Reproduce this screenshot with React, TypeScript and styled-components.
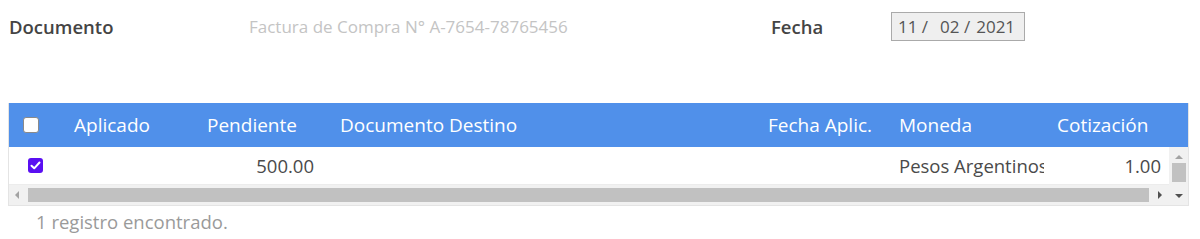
import React from "react";
import styled, { createGlobalStyle } from "styled-components";

const Global = createGlobalStyle`
  html, body { margin: 0; padding: 0; background: #fff; }
  body { font-family: "Open Sans", "Noto Sans", sans-serif; }
`;

const Page = styled.div`
  width: 1200px;
  height: 239px;
  padding: 0 11px 0 8px;
  box-sizing: border-box;
  display: flex;
  flex-direction: column;
`;

const FormRow = styled.div`
  display: flex;
  align-items: center;
  height: 53px;
  padding-left: 1px;
`;

const Label = styled.div<{ $w: number }>`
  width: ${(p) => p.$w}px;
  flex: none;
  font-size: 18.5px;
  font-weight: 600;
  color: #444;
`;

const Value = styled.div<{ $w: number }>`
  width: ${(p) => p.$w}px;
  flex: none;
  font-size: 17px;
  color: #c4c4c4;
`;

const DateBox = styled.div`
  width: 134px;
  height: 29px;
  box-sizing: border-box;
  border: 1px solid #aaa;
  background: #efefef;
  display: flex;
  align-items: center;
  padding-left: 6px;
  font-size: 17px;
  color: #555;
`;

const DatePart = styled.span<{ $mr?: number }>`
  white-space: pre;
  margin-right: ${(p) => p.$mr ?? 0}px;
`;

const Table = styled.div`
  margin-top: 50px;
  width: 1181px;
  border: 1px solid #e4e4e4;
  border-top: none;
  box-sizing: border-box;
  display: flex;
  flex-direction: column;
`;

const cols = "52px 133px 133px 428px 131px 158px 1fr";

const HeaderRow = styled.div`
  display: grid;
  grid-template-columns: ${cols};
  height: 44px;
  background: #5090ea;
  align-items: center;
  color: #fff;
  font-size: 19px;
`;

const HeadCell = styled.div<{ $pl?: number }>`
  padding-left: ${(p) => p.$pl ?? 13}px;
  white-space: nowrap;
`;

const HeadBox = styled.span`
  display: block;
  width: 16px;
  height: 16px;
  box-sizing: border-box;
  border: 1.5px solid #8a8a8a;
  border-radius: 3px;
  background: #fff;
`;

const BodyWrap = styled.div`
  display: flex;
  height: 58px;
`;

const BodyMain = styled.div`
  flex: 1;
  min-width: 0;
  display: flex;
  flex-direction: column;
`;

const DataRow = styled.div`
  display: grid;
  grid-template-columns: ${cols};
  height: 38px;
  align-items: center;
  font-size: 18.5px;
  color: #4a4a4a;
  border-bottom: 1px solid #ececec;
  box-sizing: border-box;
`;

const Cell = styled.div<{ $right?: boolean; $pl?: number; $pr?: number }>`
  padding-left: ${(p) => p.$pl ?? 13}px;
  padding-right: ${(p) => p.$pr ?? 0}px;
  text-align: ${(p) => (p.$right ? "right" : "left")};
  white-space: nowrap;
  overflow: hidden;
  text-overflow: clip;
`;

const CheckBox = styled.span`
  display: flex;
  align-items: center;
  justify-content: center;
  width: 15px;
  height: 15px;
  border-radius: 3px;
  background: #5a0ff2;
`;

const HScroll = styled.div`
  height: 20px;
  background: #f1f1f1;
  display: flex;
  align-items: center;
  padding: 0 6px 0 5px;
  gap: 8px;
`;

const HThumb = styled.div`
  flex: 1;
  height: 14px;
  background: #c1c1c1;
`;

const VScroll = styled.div`
  width: 19px;
  flex: none;
  background: #f1f1f1;
  display: flex;
  flex-direction: column;
  align-items: center;
  padding: 7px 0 6px;
  box-sizing: border-box;
`;

const VThumb = styled.div`
  width: 14px;
  height: 19px;
  margin-top: 3px;
  background: #c1c1c1;
`;

const Spacer = styled.div`
  flex: 1;
`;

const Footer = styled.div`
  margin-top: 3px;
  padding-left: 28px;
  font-size: 18.5px;
  color: #9a9a9a;
`;

const Arrow = ({ dir }: { dir: "l" | "r" | "u" | "d" }) => {
  const pts = {
    l: "5,0 5,8 1,4",
    r: "1,0 1,8 5,4",
    u: "0,5 8,5 4,1",
    d: "0,1 8,1 4,5",
  }[dir];
  const horiz = dir === "l" || dir === "r";
  return (
    <svg width={horiz ? 6 : 8} height={horiz ? 8 : 6} viewBox={horiz ? "0 0 6 8" : "0 0 8 6"}>
      <polygon points={pts} fill={dir === "l" || dir === "u" ? "#a3a3a3" : "#505050"} />
    </svg>
  );
};

export default function App() {
  return (
    <>
      <Global />
      <Page>
        <FormRow>
          <Label $w={240}>Documento</Label>
          <Value $w={522}>Factura de Compra N° A-7654-78765456</Value>
          <Label $w={120}>Fecha</Label>
          <DateBox>
            <DatePart $mr={12}>11 /</DatePart>
            <DatePart $mr={6}>02 /</DatePart>
            <DatePart>2021</DatePart>
          </DateBox>
        </FormRow>
        <Table>
          <HeaderRow>
            <HeadCell $pl={14}>
              <HeadBox />
            </HeadCell>
            <HeadCell>Aplicado</HeadCell>
            <HeadCell>Pendiente</HeadCell>
            <HeadCell>Documento Destino</HeadCell>
            <HeadCell>Fecha Aplic.</HeadCell>
            <HeadCell>Moneda</HeadCell>
            <HeadCell>Cotización</HeadCell>
          </HeaderRow>
          <BodyWrap>
            <BodyMain>
              <DataRow>
                <Cell $pl={19}>
                  <CheckBox>
                    <svg width="11" height="9" viewBox="0 0 11 9">
                      <path d="M1.5 4.8 L4.2 7.3 L9.5 1.5" fill="none" stroke="#fff" strokeWidth="2" strokeLinecap="round" strokeLinejoin="round" />
                    </svg>
                  </CheckBox>
                </Cell>
                <Cell />
                <Cell $right $pr={13}>500.00</Cell>
                <Cell />
                <Cell />
                <Cell>Pesos Argentinos</Cell>
                <Cell $right $pr={8}>1.00</Cell>
              </DataRow>
              <HScroll>
                <Arrow dir="l" />
                <HThumb />
                <Arrow dir="r" />
              </HScroll>
            </BodyMain>
            <VScroll>
              <Arrow dir="u" />
              <VThumb />
              <Spacer />
              <Arrow dir="d" />
            </VScroll>
          </BodyWrap>
        </Table>
        <Footer>1 registro encontrado.</Footer>
      </Page>
    </>
  );
}
